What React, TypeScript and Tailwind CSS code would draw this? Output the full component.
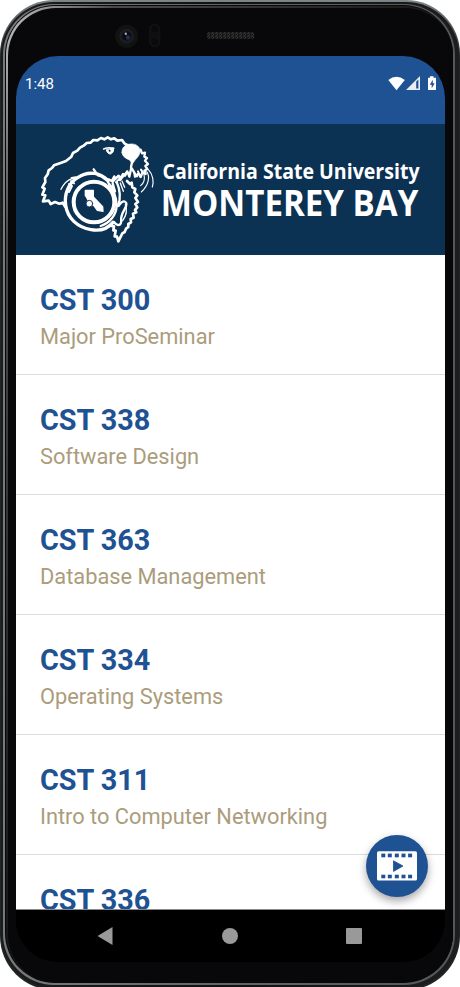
import React from "react";

const courses = [
  { code: "CST 300", title: "Major ProSeminar" },
  { code: "CST 338", title: "Software Design" },
  { code: "CST 363", title: "Database Management" },
  { code: "CST 334", title: "Operating Systems" },
  { code: "CST 311", title: "Intro to Computer Networking" },
  { code: "CST 336", title: "" },
];

function OtterLogo() {
  return (
    <svg width="130" height="130" viewBox="0 0 390 390" fill="none" stroke="white" strokeWidth="7" strokeLinejoin="round" strokeLinecap="round" className="shrink-0">
      <path d="M105 248 L98 236 L88 239 L75 234 L62 240 L56 230 L39 232 L46 214 L37 212 L44 194 L37 190 L46 174 L45 162 L53 151 L56 139 L66 132 L72 124 L94 116 L108 111 L124 98 L129 87 L142 80 L150 71 L161 65 L170 57 L182 56 L190 48 L202 49 L213 42 L223 46 L233 40 L243 46 L253 43 L262 50 L276 48 L283 58 L294 64" strokeWidth="8" />
      <path d="M276 86 C274 72 285 61 301 60 C319 58 333 70 330 85 C327 99 317 104 312 113 L306 121 L300 109 C291 104 278 100 276 86 Z" fill="white" strokeWidth="2" />
      <path d="M332 77 L336 88 L345 86 L343 98 L351 102 L345 110 L354 120 L346 126 L352 135 L343 140 L347 150 L337 146 L332 159 L325 149 L315 158 L313 146 L309 139 L303 130 L305 119 M303 135 L298 158 L292 142 L285 155 L279 150 L271 164 L266 155 L256 165 L253 157 L245 171 L236 166 L225 165 L214 157 L204 154 L191 136" />
      <path d="M248 174 L263 157 M258 175 L280 151 M270 169 L291 143 M312 145 L321 157 M324 142 L331 157 M333 137 L339 146" strokeWidth="6" />
      <path d="M221 75 C230 71 240 70 251 73" strokeWidth="5" />
      <path d="M229 78 C231 90 244 96 250 82 L251 73 Z" fill="white" strokeWidth="3" />
      <circle cx="239" cy="80" r="3" fill="#0b3153" stroke="none" />
      <circle cx="192" cy="234" r="61" strokeWidth="12" />
      <path d="M234 171 C214 146 175 139 143 161 C116 177 102 209 107 244 C112 282 142 310 183 317 C211 322 235 312 249 295" strokeWidth="10" />
      <path d="M125 162 L137 160 M123 171 L132 178 M117 180 L126 186 L117 204" strokeWidth="6" />
      <path d="M93 196 C100 181 111 168 128 163 L147 158" strokeWidth="4" />
      <path d="M234 175 C247 190 261 218 260 247 C258 273 240 297 212 306 M248 178 L255 202 M260 174 C270 196 273 218 265 246" />
      <path d="M237 180 L237 193 M244 186 L245 210 M271 177 L280 202 M276 171 L284 190" strokeWidth="4" />
      <path d="M291 171 L300 180 L305 176 L307 190 L316 195 L313 205 L322 214 L316 222 L324 234 L316 240 L322 250 L315 258 L319 265 L309 269 L311 281 L302 285 L303 295 L295 300 L295 309 L288 314 L284 324 L277 328 L265 352 L261 338 L254 337 L257 320 L250 319 L252 307 L242 305" strokeWidth="8" />
      <path d="M267 244 C277 230 285 229 289 238 C291 251 278 260 275 276 C270 289 277 291 272 299 C268 306 259 304 252 294" />
      <path d="M286 242 C292 256 289 274 278 290" strokeWidth="4" />
      <path d="M350 143 C361 158 356 184 334 204 M355 137 C369 151 372 174 367 189 M342 152 C345 165 342 177 332 185" strokeWidth="3.5" />
      <path d="M166 199 H190 V219 L218 248 L219 262 L202 259 L193 246 L179 238 L170 220 L166 215 Z" fill="white" strokeWidth="4" />
      <circle cx="178" cy="239" r="10" fill="white" stroke="#0b3153" strokeWidth="3" />
    </svg>
  );
}

function Wordmark() {
  return (
    <svg width="264" height="76" viewBox="0 0 264 76" fill="white" className="mt-[26px] shrink-0 overflow-visible" fontFamily="'Open Sans', 'Noto Sans', sans-serif" fontWeight="700">
      <text x="2.5" y="28.5" fontSize="21.5" textLength="257" lengthAdjust="spacingAndGlyphs">California State University</text>
      <text x="0.8" y="66" fontSize="35.5" textLength="257.5" lengthAdjust="spacingAndGlyphs">MONTEREY BAY</text>
    </svg>
  );
}

function StatusIcons() {
  return (
    <svg width="50" height="16" viewBox="0 0 50 16" fill="white">
      <path d="M0.3 4 Q8.5 -2.4 16.8 4 L8.5 14.3 Z" />
      <path d="M18 14 L32 0 V14 Z" fillOpacity=".9" />
      <path d="M28.2 5.4 L30.4 3.5 V12.5 H28.2 Z" fill="#1f5293" />
      <path d="M40 1.8 H42 V0.3 H45.5 V1.8 H48 V14 H40 Z" />
      <path d="M44.8 3.8 L41.8 8.8 H43.7 V12.2 L46.7 7.3 H44.8 Z" fill="#1f5293" />
    </svg>
  );
}

function FilmIcon() {
  const holes = [5, 11.5, 18.5, 25.2, 31.8];
  return (
    <svg width="40" height="30" viewBox="0 0 40 30">
      <rect x="0" y="0.3" width="40" height="29.2" rx="1.6" fill="white" />
      {holes.map((x) => (
        <g key={x} fill="#1f5293">
          <rect x={x - 0.7} y="2.6" width="4" height="3.7" />
          <rect x={x - 0.7} y="23.7" width="4" height="3.6" />
        </g>
      ))}
      <path d="M16.5 9.8 L26 15 L16.5 20.4 Z" fill="#1f5293" stroke="#1f5293" strokeWidth=".8" strokeLinejoin="round" />
    </svg>
  );
}

function Earpiece() {
  return (
    <svg width="460" height="40" viewBox="0 0 460 40" className="absolute top-[15px] left-0">
      <defs>
        <pattern id="mesh" width="4" height="3" patternUnits="userSpaceOnUse">
          <rect width="4" height="3" fill="#151515" />
          <path d="M0 0 L2 1.5 L0 3 M3 0 L4 1.5" stroke="#3a3a3a" fill="none" strokeWidth=".8" />
        </pattern>
      </defs>
      <circle cx="126.7" cy="21.3" r="11.5" fill="#121213" />
      <circle cx="126.7" cy="21.3" r="7.5" fill="#1b1c20" />
      <circle cx="126.7" cy="21" r="4.6" fill="#0b0b12" />
      <circle cx="128" cy="22.5" r="2.3" fill="#242b52" />
      <circle cx="125.8" cy="18.8" r="1.2" fill="#a9a9b0" />
      <rect x="149.8" y="9.3" width="10" height="22.5" rx="5" fill="#0f0f10" stroke="#171718" strokeWidth=".8" />
      <circle cx="154.8" cy="14" r="3.2" fill="#0a0a0b" />
      <circle cx="154.8" cy="26.5" r="3.2" fill="#0a0a0b" />
      <rect x="206.8" y="17" width="47.5" height="7" rx="2.5" fill="url(#mesh)" />
    </svg>
  );
}

export default function App() {
  return (
    <div className="h-[987px] w-[460px] overflow-hidden bg-white font-[Roboto,sans-serif]">
      <div className="relative h-[990px] w-[460px] rounded-[54px] bg-linear-to-b from-[#7e8589] from-0% via-[#222526] via-6% to-[#222526] pt-[2px] pr-[1px] pl-[1px]">
        <div className="h-[986px] rounded-[53px] bg-linear-to-r from-[#1b1c1e] via-[#101112] to-[#1b1d1f] pt-[2px] pr-[4px] pl-[2px]">
          <div className="h-[981px] rounded-[51px] bg-linear-to-r from-[#77797b] from-0% via-[#626466] via-50% to-[#555656] pt-[1px] pr-[2px] pl-[2px]">
            <div className="h-[978px] rounded-[50px] bg-[#080809] pt-[1px] pl-[1px]">
              <div className="h-[976px] rounded-[49px] bg-linear-to-br from-[#c8c8c8] from-0% via-[#4b4b4c] via-12% to-[#080809] to-60% pt-[2px] pl-[2px]">
                <div className="h-[974px] rounded-[48px] bg-[#08080a] pt-[48px] pr-[5px] pl-[8px]">
                  <div className="relative flex h-[906px] w-[429px] flex-col overflow-hidden rounded-[42px] bg-black">
                    <div className="flex h-[68px] shrink-0 items-start justify-between bg-[#1f5293] pt-5 pr-[7px] pl-[9px]">
                      <span className="text-[15px] leading-4 text-white">1:48</span>
                      <StatusIcons />
                    </div>
                    <header className="flex h-[131px] shrink-0 items-start bg-[#0b3153] pl-[14px]">
                      <OtterLogo />
                      <Wordmark />
                    </header>
                    <main className="min-h-0 flex-1 overflow-hidden bg-white">
                      {courses.map((c) => (
                        <div key={c.code} className="h-[120px] border-b border-[#dcdcdc] pt-[27px] pl-6">
                          <div className="text-[28.8px] leading-9 font-bold text-[#1f5293]">{c.code}</div>
                          <div className="text-[21.8px] leading-[38px] text-[#ab9c7c]">{c.title}</div>
                        </div>
                      ))}
                    </main>
                    <nav className="flex h-[53px] shrink-0 items-center justify-between border-t border-[#8a8a8a] bg-black pr-[83px] pl-[81px]">
                      <svg width="16" height="18" viewBox="0 0 16 18"><path d="M15.5 0 V18 L0.5 9 Z" fill="#999" /></svg>
                      <div className="size-4 rounded-full bg-[#999]" />
                      <div className="size-4 rounded-[1px] bg-[#999]" />
                    </nav>
                    <button className="absolute right-[17.5px] bottom-[65.5px] flex size-[61.5px] items-center justify-center rounded-full bg-[#1f5293] shadow-[0_4px_8px_rgba(0,0,0,0.35)]">
                      <FilmIcon />
                    </button>
                  </div>
                </div>
              </div>
            </div>
          </div>
        </div>
        <Earpiece />
      </div>
    </div>
  );
}
